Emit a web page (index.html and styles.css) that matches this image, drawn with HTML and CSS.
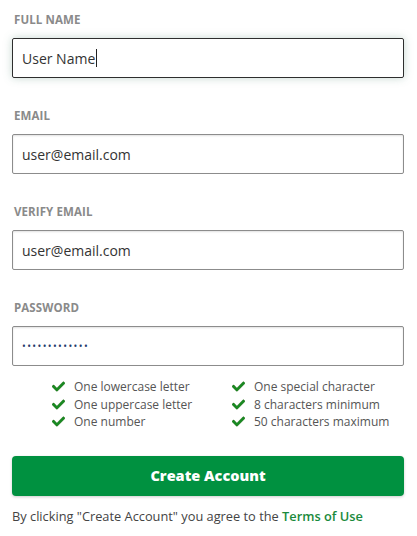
FILE: index.html
```html
<!DOCTYPE html>
<html>
<head>
<meta charset="utf-8">
<link rel="stylesheet" href="styles.css">
</head>
<body>
<form class="form">
  <div class="field">
    <label class="label">FULL NAME</label>
    <div class="input input-focus"><span>User Name</span><span class="caret"></span></div>
  </div>
  <div class="field">
    <label class="label">EMAIL</label>
    <div class="input">user@email.com</div>
  </div>
  <div class="field">
    <label class="label">VERIFY EMAIL</label>
    <div class="input">user@email.com</div>
  </div>
  <div class="field">
    <label class="label">PASSWORD</label>
    <div class="input password">•••••••••••••</div>
  </div>
  <ul class="rules">
    <li><svg class="check" viewBox="0 0 512 512"><path d="M173.9 439.4l-166.4-166.4c-10-10-10-26.2 0-36.2l36.2-36.2c10-10 26.2-10 36.2 0L192 312.7 432.1 72.6c10-10 26.2-10 36.2 0l36.2 36.2c10 10 10 26.2 0 36.2l-294.4 294.4c-10 10-26.2 10-36.2 0z"/></svg>One lowercase letter</li>
    <li><svg class="check" viewBox="0 0 512 512"><path d="M173.9 439.4l-166.4-166.4c-10-10-10-26.2 0-36.2l36.2-36.2c10-10 26.2-10 36.2 0L192 312.7 432.1 72.6c10-10 26.2-10 36.2 0l36.2 36.2c10 10 10 26.2 0 36.2l-294.4 294.4c-10 10-26.2 10-36.2 0z"/></svg>One special character</li>
    <li><svg class="check" viewBox="0 0 512 512"><path d="M173.9 439.4l-166.4-166.4c-10-10-10-26.2 0-36.2l36.2-36.2c10-10 26.2-10 36.2 0L192 312.7 432.1 72.6c10-10 26.2-10 36.2 0l36.2 36.2c10 10 10 26.2 0 36.2l-294.4 294.4c-10 10-26.2 10-36.2 0z"/></svg>One uppercase letter</li>
    <li><svg class="check" viewBox="0 0 512 512"><path d="M173.9 439.4l-166.4-166.4c-10-10-10-26.2 0-36.2l36.2-36.2c10-10 26.2-10 36.2 0L192 312.7 432.1 72.6c10-10 26.2-10 36.2 0l36.2 36.2c10 10 10 26.2 0 36.2l-294.4 294.4c-10 10-26.2 10-36.2 0z"/></svg>8 characters minimum</li>
    <li><svg class="check" viewBox="0 0 512 512"><path d="M173.9 439.4l-166.4-166.4c-10-10-10-26.2 0-36.2l36.2-36.2c10-10 26.2-10 36.2 0L192 312.7 432.1 72.6c10-10 26.2-10 36.2 0l36.2 36.2c10 10 10 26.2 0 36.2l-294.4 294.4c-10 10-26.2 10-36.2 0z"/></svg>One number</li>
    <li><svg class="check" viewBox="0 0 512 512"><path d="M173.9 439.4l-166.4-166.4c-10-10-10-26.2 0-36.2l36.2-36.2c10-10 26.2-10 36.2 0L192 312.7 432.1 72.6c10-10 26.2-10 36.2 0l36.2 36.2c10 10 10 26.2 0 36.2l-294.4 294.4c-10 10-26.2 10-36.2 0z"/></svg>50 characters maximum</li>
  </ul>
  <button type="button" class="btn">Create Account</button>
  <p class="terms">By clicking "Create Account" you agree to the <a class="link">Terms of Use</a></p>
</form>
</body>
</html>
```
FILE: styles.css
```css
* { box-sizing: border-box; }
html, body { margin: 0; padding: 0; background: #fff; }
body { font-family: "Open Sans", "Liberation Sans", sans-serif; color: #333; }
.form { padding: 12px 13px 0 12px; display: flex; flex-direction: column; }
.field { display: flex; flex-direction: column; margin-bottom: 30px; }
.field:nth-child(4) { margin-bottom: 12px; }
.label { font-size: 11.5px; font-weight: 700; color: #8a8a8a; line-height: 16px; margin-bottom: 10px; padding-left: 2px; letter-spacing: 0.1px; }
.input {
  height: 40px; border: 1px solid #8c8c8c; border-radius: 2px;
  padding: 0 9px; display: flex; align-items: center;
  font-size: 14px; color: #333;
  box-shadow: inset 0 1px 2px rgba(0,0,0,0.12);
}
.input-focus { border-color: #2e2e2e; box-shadow: 0 0 8px rgba(90,140,120,0.35); }
.caret { display: inline-block; width: 1px; height: 18px; background: #222; margin-left: 1px; }
.password { font-size: 10px; letter-spacing: 1.4px; color: #1f3a6a; }
.rules { list-style: none; margin: 0 0 25px; padding: 0 0 0 40px; display: grid; grid-template-columns: 180px 180px; font-size: 12px; color: #555; }
.rules li { display: flex; align-items: center; height: 17.5px; white-space: nowrap; }
.check { width: 13px; height: 13px; fill: #188a22; stroke: #2a5a10; stroke-width: 12; margin-right: 9px; }
.btn {
  height: 40px; width: 100%; border: none; border-radius: 4px;
  background: #009140; color: #fff; font-family: inherit; font-size: 14.5px; font-weight: 800;
  box-shadow: 0 1px 3px rgba(0,0,0,0.2);
}
.terms { margin: 12px 0 0; font-size: 12.8px; color: #444; line-height: 17px; }
.link { color: #1a8a3c; font-weight: 600; }
```
